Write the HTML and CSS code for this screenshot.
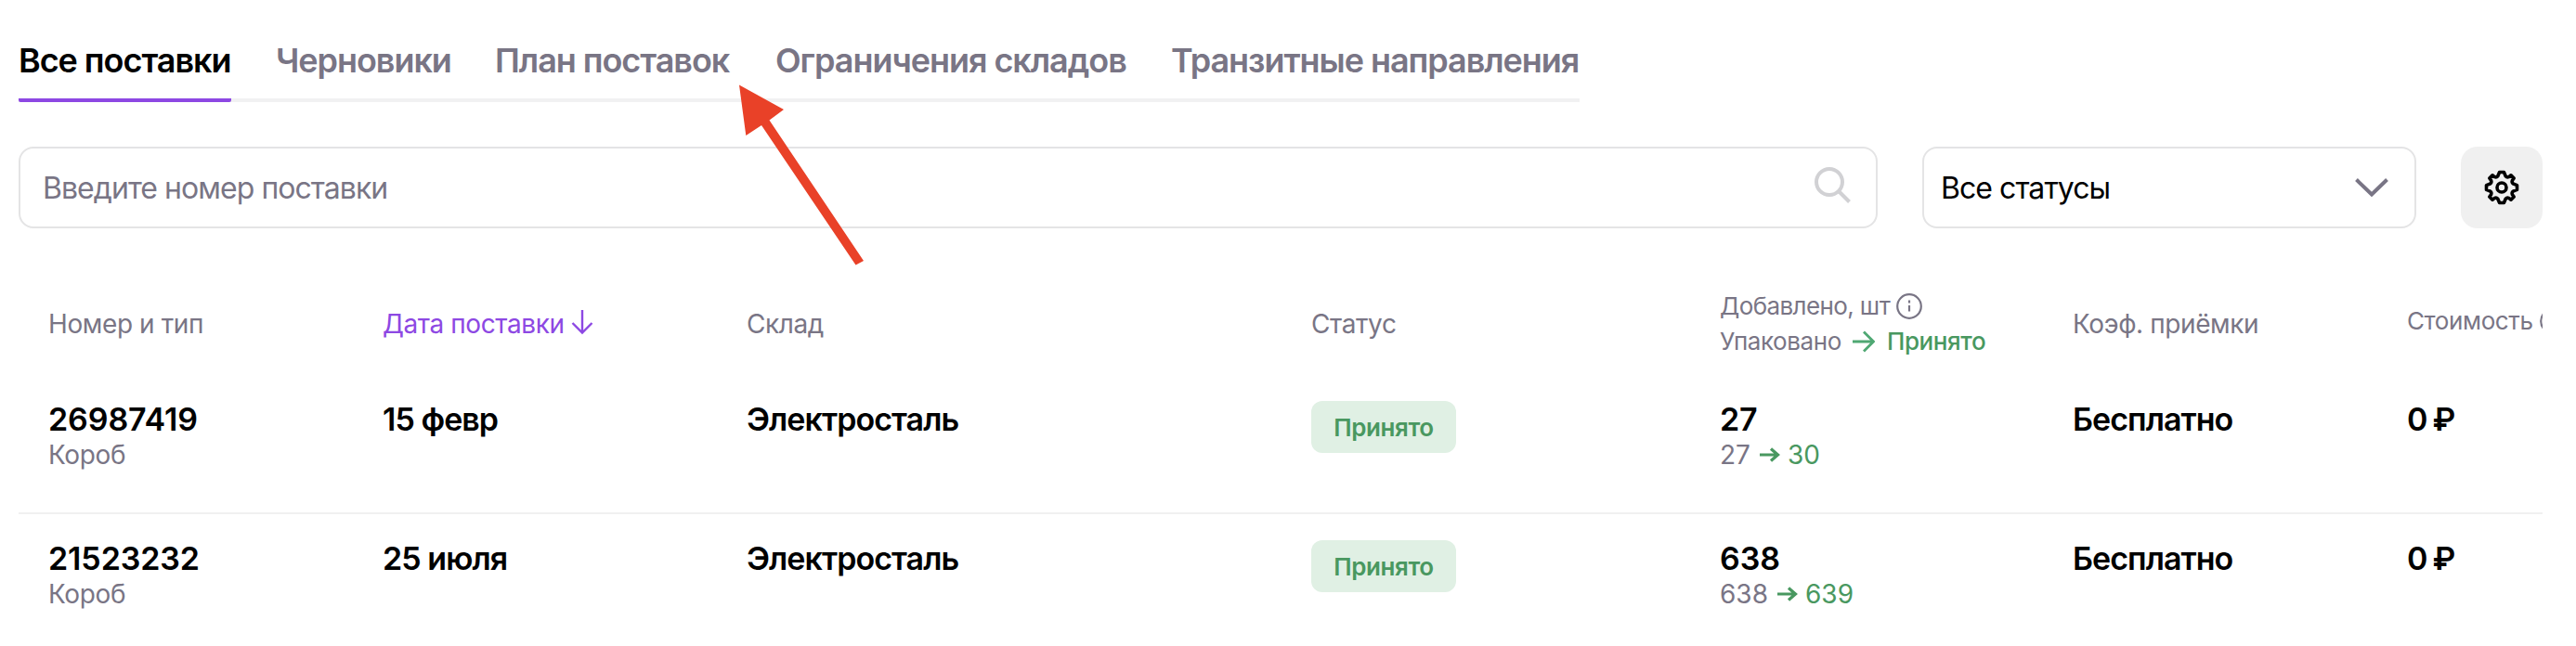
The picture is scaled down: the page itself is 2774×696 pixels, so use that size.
FILE: index.html
```html
<!DOCTYPE html>
<html lang="ru">
<head>
    <meta charset="UTF-8">
    <meta name="viewport" content="width=device-width, initial-scale=1.0">
    <title>Поставки</title>
    <link rel="stylesheet" href="styles.css">
</head>
<body>
    <div class="page">
        <nav class="tabs">
            <a class="tab tab-all active">Все поставки</a>
            <a class="tab tab-drafts">Черновики</a>
            <a class="tab tab-plan">План поставок</a>
            <a class="tab tab-limits">Ограничения складов</a>
            <a class="tab tab-transit">Транзитные направления</a>
        </nav>

        <div class="filters">
            <div class="search">
                <input type="text" class="search-input" placeholder="Введите номер поставки">
                <svg class="search-icon" viewBox="0 0 40 40">
                    <circle cx="16" cy="16" r="14"/>
                    <path d="M26 26L37.5 37.5"/>
                </svg>
            </div>
            <div class="select">
                <span>Все статусы</span>
                <svg class="chevron" viewBox="0 0 36 20">
                    <path d="M1.5 1.5L18 17.5L34.5 1.5"/>
                </svg>
            </div>
            <button type="button" class="settings">
                <svg class="gear" viewBox="-20 -20 40 40">
                    <path d="M-2.4 -16.5H2.4L4.2 -12.2Q5.6 -10.6 7.6 -11.4L10 -13.2L13.2 -10L11.4 -7.6Q10.6 -5.6 12.2 -4.2L16.5 -2.4V2.4L12.2 4.2Q10.6 5.6 11.4 7.6L13.2 10L10 13.2L7.6 11.4Q5.6 10.6 4.2 12.2L2.4 16.5H-2.4L-4.2 12.2Q-5.6 10.6 -7.6 11.4L-10 13.2L-13.2 10L-11.4 7.6Q-10.6 5.6 -12.2 4.2L-16.5 2.4V-2.4L-12.2 -4.2Q-10.6 -5.6 -11.4 -7.6L-13.2 -10L-10 -13.2L-7.6 -11.4Q-5.6 -10.6 -4.2 -12.2Z"/>
                    <circle r="5"/>
                </svg>
            </button>
        </div>

        <div class="table">
            <div class="row head">
                <div>Номер и тип</div>
                <div class="sorted">
                    <span>Дата поставки</span>
                    <svg class="sort-icon" viewBox="0 0 24 28">
                        <path d="M12 1V25M1.5 15L12 25.5L22.5 15"/>
                    </svg>
                </div>
                <div>Склад</div>
                <div>Статус</div>
                <div class="added">
                    <div class="added-line">
                        <span class="added-title">Добавлено, шт</span>
                        <svg class="info" viewBox="0 0 28 28">
                            <circle cx="14" cy="14" r="12.8"/>
                            <path d="M14 13V19.5"/>
                            <path d="M14 7.5V10.5"/>
                        </svg>
                    </div>
                    <div class="added-line">
                        <span>Упаковано</span>
                        <svg class="head-arrow" viewBox="0 0 24 24">
                            <path d="M0 12H22M12 1.5L22.5 12L12 22.5"/>
                        </svg>
                        <span class="accepted">Принято</span>
                    </div>
                </div>
                <div>Коэф. приёмки</div>
                <div class="cost">
                    <span>Стоимость</span>
                    <svg class="info" viewBox="0 0 28 28">
                        <circle cx="14" cy="14" r="12.8"/>
                    </svg>
                </div>
            </div>

            <div class="row">
                <div>
                    <div class="main num">26987419</div>
                    <div class="sub">Короб</div>
                </div>
                <div class="main">15 февр</div>
                <div class="main">Электросталь</div>
                <div><span class="badge">Принято</span></div>
                <div>
                    <div class="main num">27</div>
                    <div class="sub counts">
                        <span>27</span>
                        <svg class="row-arrow" viewBox="0 0 22 16">
                            <path d="M0 8H19M12 1.5L19.5 8L12 14.5"/>
                        </svg>
                        <span class="green">30</span>
                    </div>
                </div>
                <div class="main">Бесплатно</div>
                <div class="main price">0 ₽</div>
            </div>

            <div class="row">
                <div>
                    <div class="main num">21523232</div>
                    <div class="sub">Короб</div>
                </div>
                <div class="main">25 июля</div>
                <div class="main">Электросталь</div>
                <div><span class="badge">Принято</span></div>
                <div>
                    <div class="main num">638</div>
                    <div class="sub counts">
                        <span>638</span>
                        <svg class="row-arrow" viewBox="0 0 22 16">
                            <path d="M0 8H19M12 1.5L19.5 8L12 14.5"/>
                        </svg>
                        <span class="green">639</span>
                    </div>
                </div>
                <div class="main">Бесплатно</div>
                <div class="main price">0 ₽</div>
            </div>
        </div>
    </div>

    <!-- Стрелка на вкладку «План поставок» -->
    <svg class="pointer" viewBox="0 0 140 200">
        <path d="M1 1.5L49 28L33.5 39.5L135 191L126.5 195.5L25 45L8.3 56Z"/>
    </svg>
</body>
</html>
```
FILE: styles.css
```css
body {
    margin: 0;
    height: 696px;
    overflow: hidden;
    background: #fff;
    color: #000;
    font-family: Inter, "Noto Sans", sans-serif;
    font-size: 28px;
}
.page {
    padding: 43px 36px 0 20px;
}
svg {
    display: block;
    flex: none;
    fill: none;
    stroke: currentColor;
}

/* Tabs */
.tabs {
    display: flex;
    gap: 48px;
    width: 1681px;
    box-shadow: inset 0 -4px #f1f1f2;
}
.tab {
    box-sizing: border-box;
    height: 67px;
    border-bottom: 4px solid transparent;
    font-size: 36px;
    font-weight: 600;
    line-height: 44px;
    letter-spacing: -1.05px;
    color: #797585;
    white-space: nowrap;
}
.tab.active {
    color: #000;
    border-bottom-color: #8d48e3;
    border-radius: 2px;
}
.tab-all { width: 229px; }
.tab-drafts { width: 188px; }
.tab-plan { width: 254px; }
.tab-limits { width: 378px; }
.tab-transit { width: 440px; }

/* Filters */
.filters {
    display: flex;
    gap: 48px;
    margin-top: 48px;
    height: 88px;
    font-size: 32px;
    letter-spacing: -0.95px;
}
.search,
.select {
    display: flex;
    align-items: center;
    justify-content: space-between;
    box-sizing: border-box;
    border: 2px solid #e4e4e5;
    border-radius: 16px;
}
.search {
    flex: 1;
    padding: 0 26px 0 24px;
}
.search-input {
    flex: 1;
    padding: 0;
    border: none;
    outline: none;
    background: none;
    font: inherit;
    letter-spacing: inherit;
}
.search-input::placeholder {
    color: #797585;
    opacity: 1;
}
.search-icon {
    width: 40px;
    height: 40px;
    margin-bottom: 4px;
    color: #d1d1d4;
    stroke-width: 4;
}
.select {
    width: 532px;
    padding: 0 28px 0 18px;
}
.chevron {
    width: 36px;
    height: 20px;
    color: #797585;
    stroke-width: 4;
}
.settings {
    display: flex;
    align-items: center;
    justify-content: center;
    width: 88px;
    padding: 0;
    border: none;
    border-radius: 18px;
    background: #f0f0f0;
    color: #000;
}
.gear {
    width: 40px;
    height: 40px;
    stroke-width: 3.6;
    stroke-linejoin: round;
}

/* Table */
.table {
    margin-top: 50px;
}
.row {
    display: grid;
    grid-template-columns: 360px 392px 608px 440px 380px 360px 1fr;
    box-sizing: border-box;
    height: 150px;
    padding: 28px 0 0 32px;
    border-bottom: 2px solid #f0f0f0;
    white-space: nowrap;
}
.row > div {
    min-width: 0;
}
.head {
    align-items: center;
    height: 108px;
    padding-top: 0;
    padding-bottom: 2px;
    border-bottom: none;
    line-height: 36px;
    letter-spacing: -0.4px;
    color: #797585;
}
.sorted {
    display: flex;
    align-items: center;
    gap: 7px;
    color: #8d48e3;
}
.sort-icon {
    width: 24px;
    height: 28px;
    margin-bottom: 4px;
    stroke-width: 2.4;
}
.added {
    font-size: 26px;
    line-height: 38px;
}
.added-line {
    display: flex;
    align-items: center;
}
.added-title {
    letter-spacing: -0.6px;
}
.info {
    width: 28px;
    height: 28px;
    margin-left: 7px;
    stroke-width: 2.2;
}
.head-arrow {
    width: 24px;
    height: 24px;
    margin: 0 13px 0 12px;
    color: #4fa873;
    stroke-width: 2.8;
}
.green {
    color: #499860;
}
.accepted {
    font-weight: 500;
    color: #499860;
}
.cost {
    display: flex;
    align-items: center;
    overflow: hidden;
    padding-bottom: 6px;
    font-size: 26px;
}
.main {
    font-size: 34px;
    font-weight: 600;
    line-height: 40px;
    letter-spacing: -0.95px;
}
.num {
    letter-spacing: -0.1px;
}
.price {
    letter-spacing: -1.8px;
}
.sub {
    margin-top: 2px;
    line-height: 32px;
    letter-spacing: -0.35px;
    color: #797585;
}
.counts {
    display: flex;
    align-items: center;
    letter-spacing: 0;
}
.row-arrow {
    width: 22px;
    height: 16px;
    margin: 0 8px 0 10px;
    color: #499860;
    stroke-width: 3.2;
}
.badge {
    display: block;
    box-sizing: border-box;
    width: 156px;
    height: 56px;
    border-radius: 12px;
    background: #e0f0e4;
    color: #499860;
    font-size: 26px;
    font-weight: 600;
    line-height: 58px;
    letter-spacing: -0.4px;
    text-align: center;
}

.pointer {
    position: absolute;
    left: 795px;
    top: 90px;
    width: 140px;
    height: 200px;
    fill: #e94128;
    stroke: none;
}
```
